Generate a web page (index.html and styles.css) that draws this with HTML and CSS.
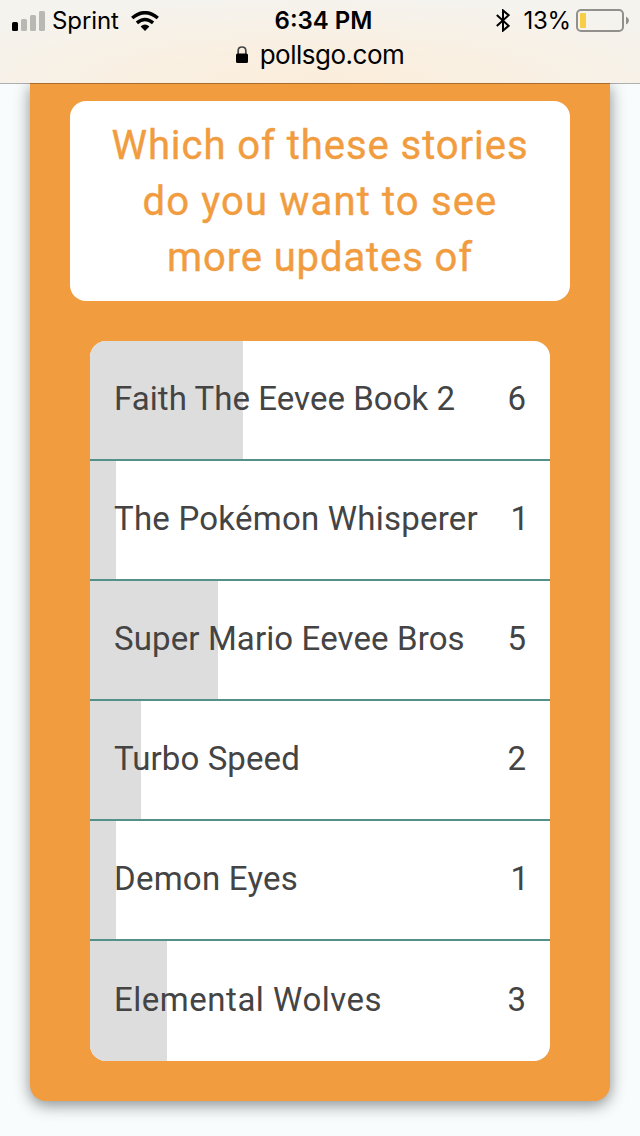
FILE: index.html
```html
<!DOCTYPE html>
<html lang="en">
<head>
    <meta charset="UTF-8">
    <meta name="viewport" content="width=device-width, initial-scale=1.0">
    <title>pollsgo.com</title>
    <link rel="stylesheet" href="styles.css">
</head>
<body>
    <header class="browser-bar">
        <div class="status">
            <div class="status-left">
                <svg class="signal" width="34" height="20" viewBox="0 0 34 20">
                    <rect x="0" y="11" width="6" height="9" rx="1.5" fill="#000"/>
                    <rect x="9" y="8" width="6" height="12" rx="1.5" fill="#b9b8b3"/>
                    <rect x="18" y="4" width="6" height="16" rx="1.5" fill="#b9b8b3"/>
                    <rect x="27" y="0" width="6" height="20" rx="1.5" fill="#b9b8b3"/>
                </svg>
                <span class="carrier">Sprint</span>
                <svg class="wifi" width="28" height="20" viewBox="0 0 28 20">
                    <path d="M1.2 7 Q14 -3.6 26.8 7" fill="none" stroke="#000" stroke-width="3.5"/>
                    <path d="M5.9 11.9 Q14 4.9 22.1 11.9" fill="none" stroke="#000" stroke-width="3.4"/>
                    <path d="M9.6 15.6 Q14 11.4 18.4 15.6 L14 20 Z" fill="#000"/>
                </svg>
            </div>
            <span class="time">6:34 PM</span>
            <div class="status-right">
                <svg class="bluetooth" width="14" height="23" viewBox="0 0 14 23">
                    <path d="M0.8 6 L12.6 16.8 L7 21.6 V1.4 L12.6 6.2 L0.8 17" fill="none" stroke="#000" stroke-width="2"/>
                </svg>
                <span class="percent">13%</span>
                <svg class="battery" width="53" height="23" viewBox="0 0 53 23">
                    <rect x="1" y="1" width="46" height="21" rx="4" fill="none" stroke="#91908c" stroke-width="2"/>
                    <rect x="4" y="4" width="6" height="15" rx="1" fill="#f8ce46"/>
                    <path d="M50 7.5 Q53 9 53 11.5 Q53 14 50 15.5 Z" fill="#91908c"/>
                </svg>
            </div>
        </div>
        <div class="address">
            <svg class="lock" width="12" height="17" viewBox="0 0 12 17">
                <path d="M2.2 8 V4.5 Q2.2 1 6 1 Q9.8 1 9.8 4.5 V8" fill="none" stroke="#444" stroke-width="1.7"/>
                <rect x="0" y="7.5" width="12" height="9.5" rx="1.5" fill="#000"/>
            </svg>
            <span class="domain">pollsgo.com</span>
        </div>
    </header>

    <main class="poll">
        <h1 class="question">
            <span class="line line-1">Which of these stories</span>
            <span class="line line-2">do you want to see</span>
            <span class="line line-3">more updates of</span>
        </h1>

        <ul class="results">
            <li class="result">
                <div class="bar" style="width: 33.33%"></div>
                <span class="name faith">Faith The Eevee Book 2</span>
                <span class="votes">6</span>
            </li>
            <li class="result">
                <div class="bar" style="width: 5.56%"></div>
                <span class="name whisperer">The Pokémon Whisperer</span>
                <span class="votes single">1</span>
            </li>
            <li class="result">
                <div class="bar" style="width: 27.78%"></div>
                <span class="name mario">Super Mario Eevee Bros</span>
                <span class="votes">5</span>
            </li>
            <li class="result">
                <div class="bar" style="width: 11.11%"></div>
                <span class="name turbo">Turbo Speed</span>
                <span class="votes">2</span>
            </li>
            <li class="result">
                <div class="bar" style="width: 5.56%"></div>
                <span class="name demon">Demon Eyes</span>
                <span class="votes single">1</span>
            </li>
            <li class="result">
                <div class="bar" style="width: 16.67%"></div>
                <span class="name wolves">Elemental Wolves</span>
                <span class="votes">3</span>
            </li>
        </ul>
    </main>
</body>
</html>
```
FILE: styles.css
```css
* {
    box-sizing: border-box;
}
body {
    margin: 0;
    height: 1136px;
    overflow: hidden;
    background-color: #f8fcfd;
    font-family: Roboto, sans-serif;
}

/* browser bar */
.browser-bar {
    position: relative;
    z-index: 1;
    height: 84px;
    border-bottom: 1px solid rgba(0, 0, 0, 0.3);
    background: radial-gradient(ellipse 420px 85px at 50% 100%, #fbeddb, #f9f0e3 50%, #f5f3ee 100%);
    background-clip: padding-box;
    color: #000;
    font-family: Inter, sans-serif;
}
.status {
    display: grid;
    grid-template-columns: 1fr auto 1fr;
    align-items: center;
    height: 41px;
    padding: 0 11px 0 12px;
    font-size: 24px;
}
.status-left, .status-right {
    display: flex;
    align-items: center;
}
.status-right {
    justify-content: flex-end;
}
.carrier {
    margin: 0 12px 0 6px;
    letter-spacing: -0.1px;
}
.time {
    padding-left: 6px;
    font-weight: 600;
}
.percent {
    margin: 0 5px 0 13px;
    letter-spacing: -0.2px;
}
.address {
    display: flex;
    justify-content: center;
    align-items: center;
    gap: 12px;
    height: 28px;
    margin-top: -1px;
    font-size: 26px;
    letter-spacing: -0.5px;
}

/* poll card */
.poll {
    width: 580px;
    height: 1018px;
    margin: -1px auto 0;
    padding: 18px 40px 40px;
    border-radius: 0 0 16px 16px;
    background-color: #f19c3f;
    box-shadow: 0 4px 16px rgba(0, 0, 0, 0.45);
}
.question {
    height: 200px;
    margin: 0 0 40px;
    padding: 17px 0 15px;
    border-radius: 16px;
    background-color: #fff;
    color: #f19c3f;
    font-size: 40px;
    font-weight: 400;
    line-height: 56px;
    text-align: center;
    -webkit-text-stroke: 0.4px #f19c3f;
}
.line {
    display: block;
    white-space: nowrap;
}
.line-1 {
    letter-spacing: 0.95px;
}
.line-2 {
    letter-spacing: 1.15px;
}
.line-3 {
    letter-spacing: 0.9px;
}
.results {
    width: 460px;
    margin: 0 auto;
    padding: 0;
    border-radius: 16px;
    overflow: hidden;
    background-color: #fff;
    list-style: none;
}
.result {
    position: relative;
    display: flex;
    justify-content: space-between;
    align-items: center;
    height: 120px;
    padding: 0 24px 3px;
    border-bottom: 2px solid #549089;
    color: #444;
    font-size: 33px;
}
.result:last-child {
    border-bottom: none;
}
.bar {
    position: absolute;
    top: 0;
    bottom: 0;
    left: 0;
    background-color: #ddd;
}
.name, .votes {
    position: relative;
    white-space: nowrap;
}
.single {
    margin-right: -3px;
}
.faith {
    letter-spacing: 0.05px;
}
.whisperer {
    letter-spacing: 0.23px;
}
.mario {
    letter-spacing: 0.12px;
}
.turbo {
    letter-spacing: 0.1px;
}
.demon {
    letter-spacing: 0.25px;
}
.wolves {
    letter-spacing: 0.52px;
}
```
